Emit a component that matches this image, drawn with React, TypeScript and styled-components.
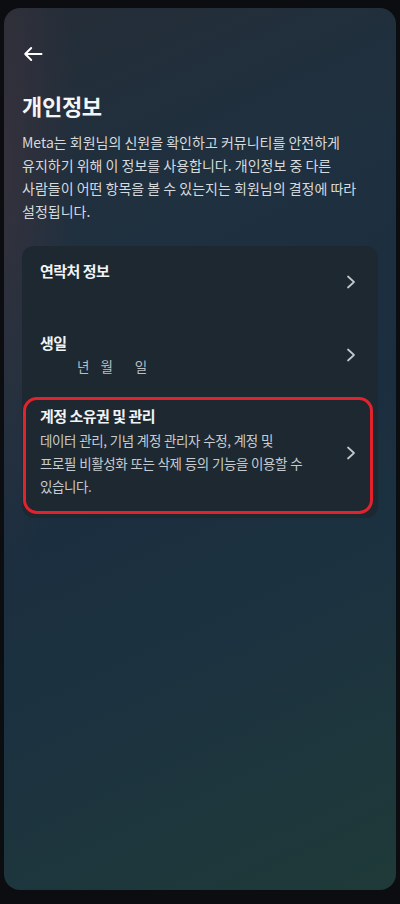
import React, { ReactElement, ReactNode } from "react";
import styled, { createGlobalStyle } from "styled-components";

const FONT = `"Noto Sans CJK KR", "Noto Sans", sans-serif`;

const GlobalStyle = createGlobalStyle`
  html, body {
    margin: 0;
    padding: 0;
    background: #0b0d10;
  }
  body {
    font-family: ${FONT};
    -webkit-font-smoothing: antialiased;
  }
`;

const BackIcon = (): ReactElement => (
  <svg width="20" height="16" viewBox="0 0 20 16" fill="none">
    <path
      d="M18.5 8H2.2M8.2 2L2.2 8L8.2 14"
      stroke="#ffffff"
      strokeWidth="2"
      strokeLinecap="round"
      strokeLinejoin="round"
    />
  </svg>
);

const ChevronIcon = (): ReactElement => (
  <svg width="10" height="14" viewBox="0 0 10 14" fill="none">
    <path
      d="M2 1.5L8 7L2 12.5"
      stroke="#c3c8cd"
      strokeWidth="1.7"
      strokeLinecap="round"
      strokeLinejoin="round"
    />
  </svg>
);

interface RowProps {
  title: string;
  children?: ReactNode;
  minHeight?: number;
  highlighted?: boolean;
  pad?: string;
}

const SettingsRow = ({
  title,
  children,
  minHeight,
  highlighted,
  pad,
}: RowProps): ReactElement => {
  return (
    <Row $minHeight={minHeight} $pad={pad}>
      <RowBody>
        <RowTitle>{title}</RowTitle>
        {children}
      </RowBody>
      <ChevronWrap>
        <ChevronIcon />
      </ChevronWrap>
      {highlighted && <Highlight />}
    </Row>
  );
};

export default function App(): ReactElement {
  return (
    <>
      <GlobalStyle />
      <Screen>
        <Panel>
          <BackButton>
            <BackIcon />
          </BackButton>

          <PageTitle>개인정보</PageTitle>

          <Intro>
            Meta는 회원님의 신원을 확인하고 커뮤니티를 안전하게
            <br />
            유지하기 위해 이 정보를 사용합니다. 개인정보 중 다른
            <br />
            사람들이 어떤 항목을 볼 수 있는지는 회원님의 결정에 따라
            <br />
            설정됩니다.
          </Intro>

          <ListCard>
            <SettingsRow title="연락처 정보" minHeight={72} />

            <SettingsRow title="생일" pad="16px 22px 14px 18px">
              <DateLine>
                <DatePart $gap={37}>년</DatePart>
                <DatePart $gap={11}>월</DatePart>
                <DatePart $gap={22}>일</DatePart>
              </DateLine>
            </SettingsRow>

            <SettingsRow
              title="계정 소유권 및 관리"
              pad="17px 22px 17px 18px"
              highlighted
            >
              <RowText>
                데이터 관리, 기념 계정 관리자 수정, 계정 및
                <br />
                프로필 비활성화 또는 삭제 등의 기능을 이용할 수
                <br />
                있습니다.
              </RowText>
            </SettingsRow>
          </ListCard>
        </Panel>
      </Screen>
    </>
  );
}

const Screen = styled.div`
  width: 400px;
  height: 904px;
  box-sizing: border-box;
  padding: 8px 4px 14px 4px;
  background: #0b0d10;
  display: flex;
`;

const Panel = styled.div`
  flex: 1;
  border-radius: 16px;
  padding: 38px 18px 0 18px;
  display: flex;
  flex-direction: column;
  background:
    radial-gradient(ellipse 70px 420px at 0% 18%, rgba(56, 50, 60, 0.8), rgba(56, 50, 60, 0) 100%),
    linear-gradient(155deg, #252d37 0%, #1f303f 26%, #1b2e3f 52%, #1c3240 70%, #1f3a38 100%);
  color: #ffffff;
`;

const BackButton = styled.div`
  width: 20px;
  height: 16px;
  margin-left: 1px;
  display: flex;
  cursor: pointer;
`;

const PageTitle = styled.h1`
  margin: 29px 0 0 0;
  font-family: ${FONT};
  font-size: 22px;
  line-height: 28px;
  font-weight: 700;
  letter-spacing: -0.3px;
  color: #f4f5f6;
`;

const Intro = styled.p`
  margin: 12px 0 0 0;
  font-size: 14px;
  line-height: 23px;
  letter-spacing: 0;
  color: #d6dadd;
`;

const ListCard = styled.div`
  margin-top: 23px;
  border-radius: 12px;
  background: #1d2831;
  padding-bottom: 3px;
  display: flex;
  flex-direction: column;
`;

const Row = styled.div<{ $minHeight?: number; $pad?: string }>`
  position: relative;
  box-sizing: border-box;
  min-height: ${(p) => (p.$minHeight ? `${p.$minHeight}px` : "auto")};
  padding: ${(p) => p.$pad ?? "16px 22px 16px 18px"};
  display: flex;
  align-items: center;
  cursor: pointer;
`;

const RowBody = styled.div`
  flex: 1;
  align-self: flex-start;
  display: flex;
  flex-direction: column;
`;

const RowTitle = styled.div`
  font-size: 15px;
  line-height: 18px;
  font-weight: 700;
  letter-spacing: -0.5px;
  color: #f2f3f4;
`;

const RowText = styled.div`
  margin-top: 4px;
  font-size: 13.5px;
  line-height: 23px;
  letter-spacing: -0.4px;
  word-spacing: 0.5px;
  color: #c6cbcf;
`;

const DateLine = styled.div`
  margin-top: 4px;
  display: flex;
  font-size: 13.5px;
  line-height: 20px;
  color: #b9bfc4;
`;

const DatePart = styled.span<{ $gap: number }>`
  margin-left: ${(p) => p.$gap}px;
`;

const ChevronWrap = styled.div`
  width: 10px;
  height: 14px;
  display: flex;
  flex-shrink: 0;
`;

const Highlight = styled.div`
  position: absolute;
  top: 7px;
  left: 1px;
  right: 5px;
  bottom: 1px;
  border: 3px solid #e2232d;
  border-radius: 14px;
  pointer-events: none;
`;
